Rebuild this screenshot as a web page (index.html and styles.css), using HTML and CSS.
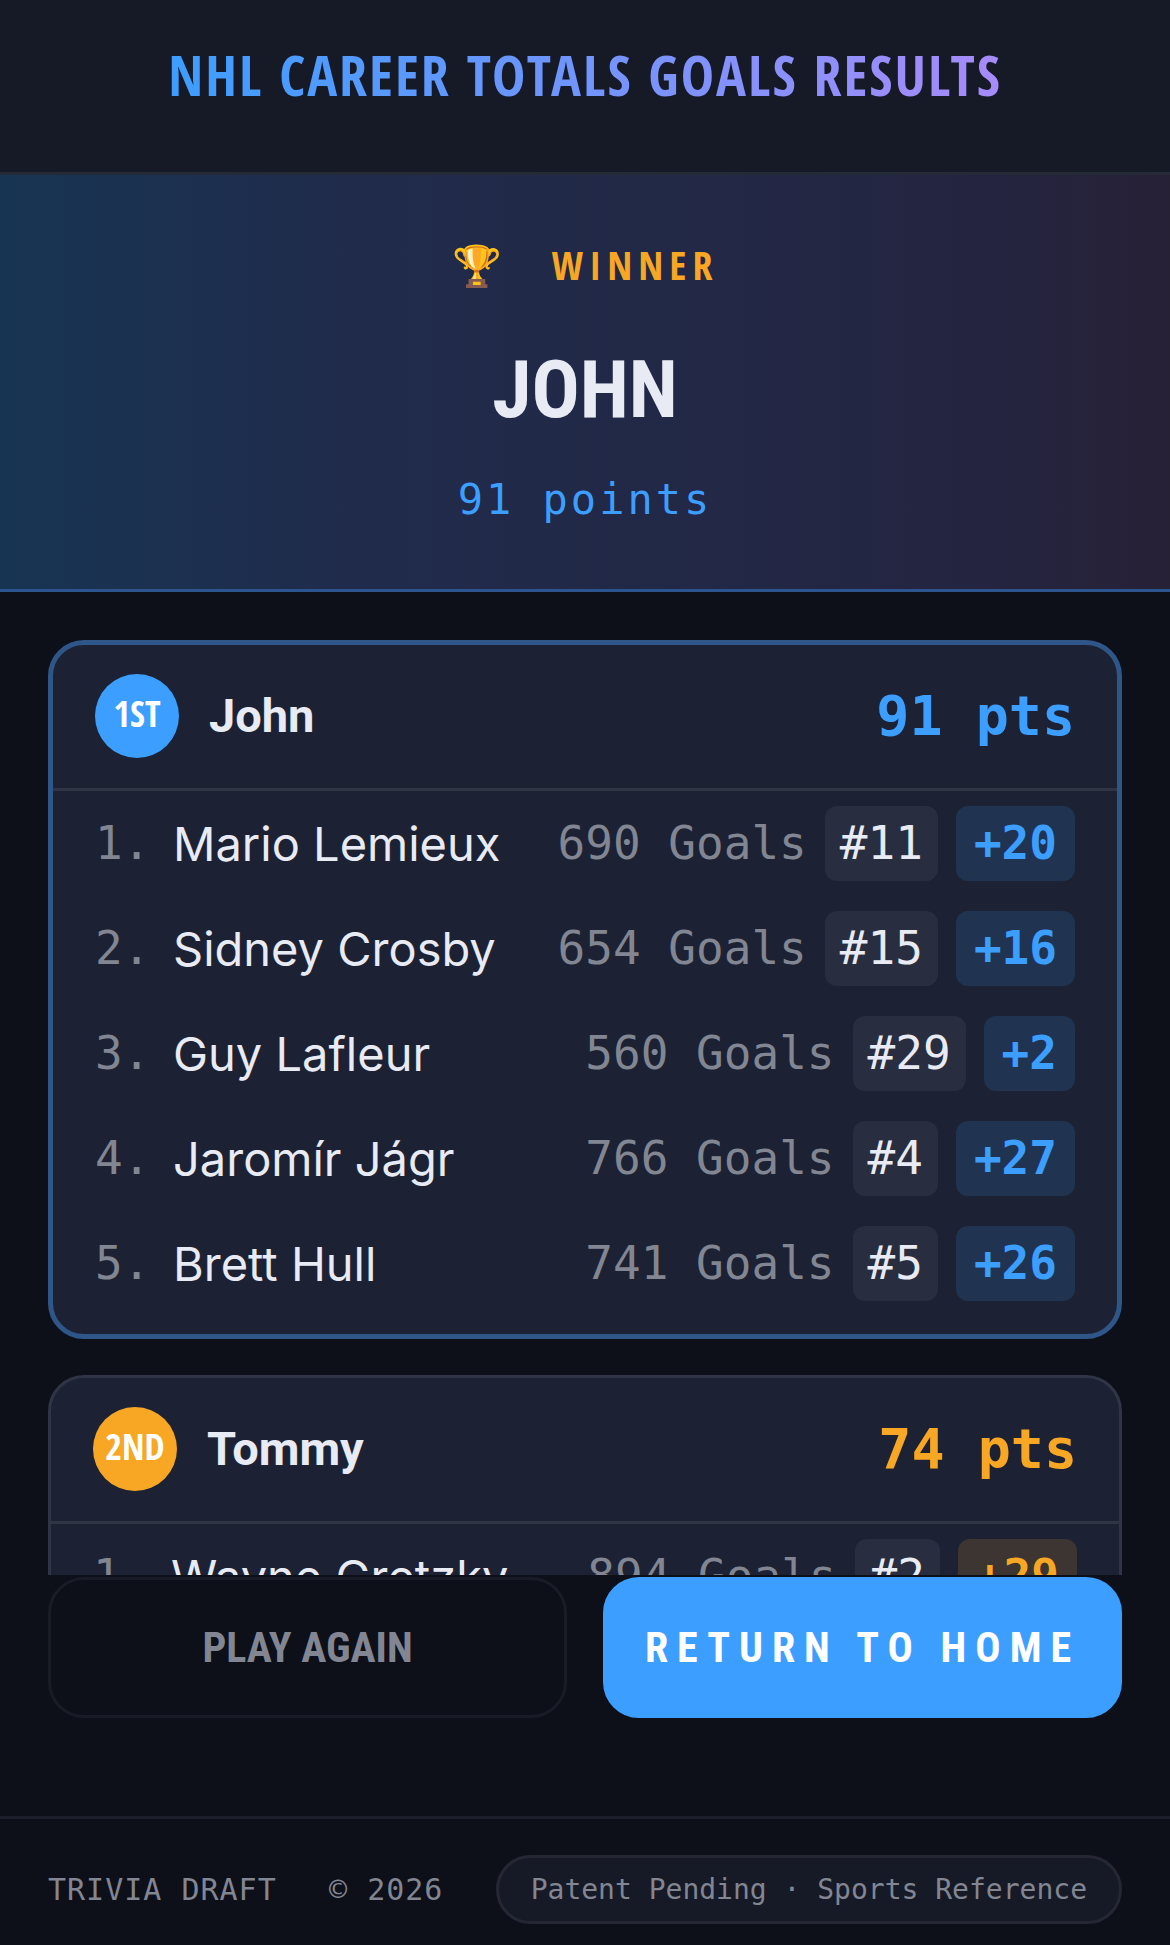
FILE: index.html
```html
<!DOCTYPE html>
<html lang="en">
<head>
    <meta charset="UTF-8">
    <meta name="viewport" content="width=device-width, initial-scale=1.0">
    <title>NHL Career Totals Goals Results</title>
    <link rel="stylesheet" href="styles.css">
</head>
<body>

<header class="top-bar">
    <h1 class="title">NHL CAREER TOTALS GOALS RESULTS</h1>
</header>

<section class="winner">
    <div class="winner-label"><span>🏆</span><span>WINNER</span></div>
    <h2 class="winner-name">JOHN</h2>
    <p class="winner-points">91 points</p>
</section>

<!-- Scrollable list of player cards -->
<main class="results">
    <article class="card card-first">
        <div class="card-header">
            <span class="rank">1ST</span>
            <h3 class="player">John</h3>
            <span class="total">91 pts</span>
        </div>
        <ol class="picks">
            <li class="pick">
                <span class="num">1.</span>
                <span class="name">Mario Lemieux</span>
                <span class="stat">690 Goals</span>
                <span class="chip">#11</span>
                <span class="chip score">+20</span>
            </li>
            <li class="pick">
                <span class="num">2.</span>
                <span class="name">Sidney Crosby</span>
                <span class="stat">654 Goals</span>
                <span class="chip">#15</span>
                <span class="chip score">+16</span>
            </li>
            <li class="pick">
                <span class="num">3.</span>
                <span class="name">Guy Lafleur</span>
                <span class="stat">560 Goals</span>
                <span class="chip">#29</span>
                <span class="chip score">+2</span>
            </li>
            <li class="pick">
                <span class="num">4.</span>
                <span class="name">Jaromír Jágr</span>
                <span class="stat">766 Goals</span>
                <span class="chip">#4</span>
                <span class="chip score">+27</span>
            </li>
            <li class="pick">
                <span class="num">5.</span>
                <span class="name">Brett Hull</span>
                <span class="stat">741 Goals</span>
                <span class="chip">#5</span>
                <span class="chip score">+26</span>
            </li>
        </ol>
    </article>

    <article class="card card-second">
        <div class="card-header">
            <span class="rank">2ND</span>
            <h3 class="player">Tommy</h3>
            <span class="total">74 pts</span>
        </div>
        <ol class="picks">
            <li class="pick">
                <span class="num">1.</span>
                <span class="name">Wayne Gretzky</span>
                <span class="stat">894 Goals</span>
                <span class="chip">#2</span>
                <span class="chip score">+29</span>
            </li>
        </ol>
    </article>
</main>

<div class="actions">
    <button type="button" class="btn btn-again">PLAY AGAIN</button>
    <button type="button" class="btn btn-home">RETURN TO HOME</button>
</div>

<footer class="footer">
    <span>TRIVIA DRAFT</span>
    <span>© 2026</span>
    <span class="pill">Patent Pending · Sports Reference</span>
</footer>

</body>
</html>
```
FILE: styles.css
```css
:root {
    --bg: #0d0f19;
    --bar: #161a26;
    --card: #1c2233;
    --line: #303546;
    --text: #e8eaf4;
    --muted: #828692;
    --blue: #3c9eff;
    --orange: #f7a724;
    --display: "Open Sans Condensed", "Roboto Condensed", sans-serif;
    --heading: "Roboto Condensed", Roboto, sans-serif;
    --mono: "DejaVu Sans Mono", monospace;
}

* {
    box-sizing: border-box;
}

body {
    display: flex;
    flex-direction: column;
    height: 100vh;
    margin: 0;
    overflow: hidden;
    background-color: var(--bg);
    color: var(--text);
    font-family: Inter, sans-serif;
}

h1, h2, h3, p, ol {
    margin: 0;
    padding: 0;
}

/* Header */
.top-bar {
    padding: 34px 48px 58px;
    border-bottom: 3px solid #252a37;
    background-color: var(--bar);
    text-align: center;
}

.title {
    display: inline-block;
    background: linear-gradient(90deg, var(--blue), #a78bfa);
    -webkit-background-clip: text;
    background-clip: text;
    color: transparent;
    font: bold 56px/80px var(--display);
    letter-spacing: 2px;
}

/* Winner banner */
.winner {
    display: flex;
    flex-direction: column;
    align-items: center;
    padding: 60px 48px 58px;
    border-bottom: 3px solid #2c5590;
    background: linear-gradient(90deg, #183453, #202b4b 30%, #222846 60%, #242440 85%, #272136);
}

.winner-label {
    display: flex;
    gap: 44px;
    color: var(--orange);
    font: bold 40px/60px var(--display);
    letter-spacing: 6px;
}

.winner-name {
    margin-top: 30px;
    font: bold 80px/130px var(--heading);
}

.winner-points {
    margin-top: 14px;
    color: var(--blue);
    font: 42px/62px var(--mono);
    letter-spacing: 3px;
}

/* Player cards */
.results {
    display: flex;
    flex: 1;
    flex-direction: column;
    gap: 36px;
    min-height: 0;
    padding: 48px 48px 0;
    overflow-y: auto;
    scrollbar-width: none;
}

.card {
    flex-shrink: 0;
    border: 3px solid var(--line);
    border-radius: 36px;
    background-color: var(--card);
}

.card-first {
    --accent: var(--blue);
    --accent-bg: #203452;
    border: 5px solid #2f5688;
}

.card-second {
    --accent: var(--orange);
    --accent-bg: #3d3531;
}

.card-header {
    display: flex;
    align-items: center;
    gap: 30px;
    padding: 29px 42px 30px;
    border-bottom: 3px solid var(--line);
}

.rank {
    width: 84px;
    height: 84px;
    border-radius: 50%;
    background-color: var(--accent);
    color: #fff;
    font: bold 36px/80px var(--display);
    text-align: center;
}

.player {
    flex: 1;
    font: bold 47px/60px Roboto, sans-serif;
}

.total {
    color: var(--accent);
    font: bold 55px/60px var(--mono);
}

.picks {
    padding-bottom: 18px;
    list-style: none;
}

.pick {
    display: flex;
    align-items: center;
    gap: 18px;
    padding: 15px 42px;
    font: 46px/75px var(--mono);
}

.num {
    width: 60px;
    color: var(--muted);
}

.name {
    flex: 1;
    font-family: Inter, sans-serif;
    font-size: 47px;
}

.stat {
    color: var(--muted);
}

.chip {
    padding: 0 15px;
    border-radius: 12px;
    background-color: #282e3f;
}

.score {
    padding: 0 18px;
    background-color: var(--accent-bg);
    color: var(--accent);
    font-weight: bold;
}

/* Bottom buttons */
.actions {
    display: grid;
    grid-template-columns: 1fr 1fr;
    gap: 36px;
    padding: 2px 48px 98px;
}

.btn {
    padding: 36px 12px;
    border: 3px solid #191c27;
    border-radius: 36px;
    background-color: transparent;
    color: var(--muted);
    font: bold 42px/63px var(--heading);
    cursor: pointer;
}

.btn-home {
    border-color: var(--blue);
    background-color: var(--blue);
    color: #fff;
    letter-spacing: 9px;
}

/* Footer */
.footer {
    display: flex;
    align-items: center;
    justify-content: space-between;
    padding: 36px 48px 21px;
    border-top: 3px solid #1c1f2a;
    color: var(--muted);
    font: 30px/63px var(--mono);
    letter-spacing: 1px;
}

.pill {
    padding: 0 32px;
    border: 3px solid #252834;
    border-radius: 36px;
    background-color: var(--bar);
    font-size: 28px;
    letter-spacing: 0;
}
```
